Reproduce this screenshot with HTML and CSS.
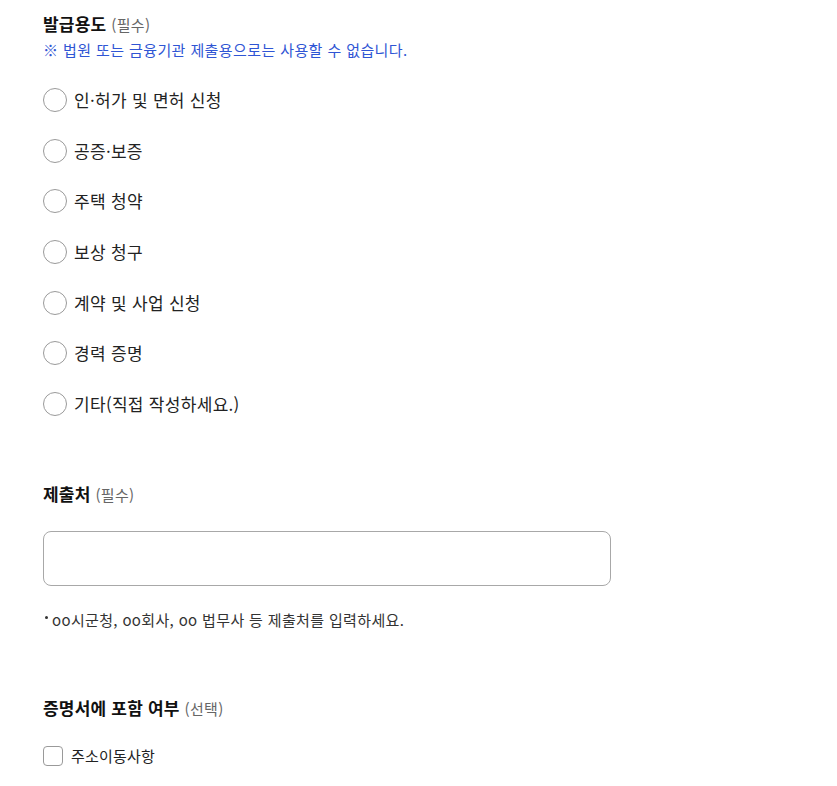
FILE: index.html
```html
<!DOCTYPE html>
<html lang="ko">
<head>
<meta charset="utf-8">
<title>발급용도</title>
<link rel="stylesheet" href="styles.css">
</head>
<body>
<div class="form">
  <div class="section-title">발급용도 <span class="sub">(필수)</span></div>
  <p class="note">※ 법원 또는 금융기관 제출용으로는 사용할 수 없습니다.</p>
  <ul class="radio-list">
    <li><label class="radio"><input type="radio" name="use"><span>인·허가 및 면허 신청</span></label></li>
    <li><label class="radio"><input type="radio" name="use"><span>공증·보증</span></label></li>
    <li><label class="radio"><input type="radio" name="use"><span>주택 청약</span></label></li>
    <li><label class="radio"><input type="radio" name="use"><span>보상 청구</span></label></li>
    <li><label class="radio"><input type="radio" name="use"><span>계약 및 사업 신청</span></label></li>
    <li><label class="radio"><input type="radio" name="use"><span>경력 증명</span></label></li>
    <li><label class="radio"><input type="radio" name="use"><span>기타(직접 작성하세요.)</span></label></li>
  </ul>

  <div class="section-title title-submit">제출처 <span class="sub">(필수)</span></div>
  <input class="text-input" type="text">
  <p class="help"><span class="dot"></span>oo시군청, oo회사, oo 법무사 등 제출처를 입력하세요.</p>

  <div class="section-title title-include">증명서에 포함 여부 <span class="sub">(선택)</span></div>
  <label class="check"><input type="checkbox"><span>주소이동사항</span></label>
</div>
</body>
</html>
```
FILE: styles.css
```css
html, body {
  margin: 0;
  padding: 0;
  background: #fff;
}
body {
  font-family: "Noto Sans CJK KR", "Noto Sans", sans-serif;
  color: #222;
}
.form {
  padding: 12px 0 0 43px;
  width: 568px;
}
.section-title {
  font-size: 17px;
  line-height: 24px;
  height: 24px;
  font-weight: 700;
  color: #111;
  letter-spacing: 0.2px;
}
.section-title .sub {
  font-size: 15px;
  line-height: 16px;
  font-weight: 400;
  color: #666;
  letter-spacing: 0.3px;
}
.note {
  margin: 4px 0 0;
  font-size: 15px;
  line-height: 20px;
  height: 20px;
  color: #2f55d4;
  letter-spacing: 0.4px;
}
.radio-list {
  list-style: none;
  margin: 15px 0 0;
  padding: 0;
}
.radio-list li {
  height: 50.6px;
  display: flex;
  align-items: center;
}
.radio {
  display: flex;
  align-items: center;
  gap: 7px;
  font-size: 17px;
  line-height: 24px;
  color: #222;
  letter-spacing: 0.3px;
}
.radio input {
  appearance: none;
  -webkit-appearance: none;
  margin: 0;
  width: 24px;
  height: 24px;
  border: 1px solid #9a9a9a;
  border-radius: 50%;
  background: #fff;
  box-sizing: border-box;
}
.title-submit {
  margin-top: 52.5px;
}
.text-input {
  display: block;
  box-sizing: border-box;
  margin-top: 25px;
  width: 568px;
  height: 55px;
  border: 1px solid #a8a8a8;
  border-radius: 8px;
  background: #fff;
  padding: 0 14px;
  font-size: 15px;
  outline: none;
}
.help {
  margin: 24px 0 0;
  font-size: 15px;
  line-height: 20px;
  height: 20px;
  color: #333;
  letter-spacing: 0.35px;
  display: flex;
  align-items: flex-start;
}
.help .dot {
  width: 3px;
  height: 3px;
  border-radius: 50%;
  background: #333;
  margin: 6px 4px 0 2px;
  flex: none;
}
.title-include {
  margin-top: 66px;
}
.check {
  margin-top: 26px;
  display: flex;
  align-items: center;
  gap: 8px;
  font-size: 15px;
  color: #222;
  height: 20px;
  letter-spacing: 0.2px;
}
.check input {
  appearance: none;
  -webkit-appearance: none;
  margin: 0;
  width: 20px;
  height: 20px;
  border: 1px solid #9a9a9a;
  border-radius: 4px;
  background: #fff;
  box-sizing: border-box;
}
```
